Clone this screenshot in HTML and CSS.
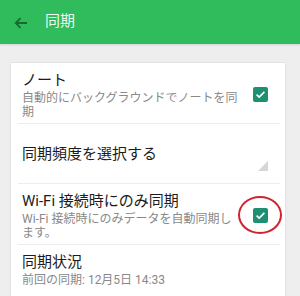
FILE: index.html
```html
<!DOCTYPE html>
<html lang="ja">
<head>
<meta charset="utf-8">
<link rel="stylesheet" href="styles.css">
</head>
<body>
<header class="appbar">
  <svg class="back" width="14" height="12" viewBox="0 0 14 12"><path d="M13 6H2M6.5 1.2L1.7 6l4.8 4.8" fill="none" stroke="#17692f" stroke-width="1.8"/></svg>
  <span class="appbar-title">同期</span>
</header>
<main class="page">
  <section class="card">
    <div class="row">
      <div class="text">
        <div class="title">ノート</div>
        <div class="sub">自動的にバックグラウンドでノートを同期</div>
      </div>
      <span class="check"><svg width="15" height="15" viewBox="0 0 15 15"><path d="M3.6 7.6l2.6 2.5 5.2-5.2" fill="none" stroke="#fff" stroke-width="1.7"/></svg></span>
    </div>
    <div class="row row-single">
      <div class="text">
        <div class="title">同期頻度を選択する</div>
      </div>
      <span class="spinner"></span>
    </div>
    <div class="row">
      <div class="text">
        <div class="title">Wi-Fi 接続時にのみ同期</div>
        <div class="sub">Wi-Fi 接続時にのみデータを自動同期します。</div>
      </div>
      <span class="check marked"><svg width="15" height="15" viewBox="0 0 15 15"><path d="M3.6 7.6l2.6 2.5 5.2-5.2" fill="none" stroke="#fff" stroke-width="1.7"/></svg></span>
    </div>
    <div class="row row-last">
      <div class="text">
        <div class="title">同期状況</div>
        <div class="sub">前回の同期: 12月5日 14:33</div>
      </div>
    </div>
  </section>
</main>
</body>
</html>
```
FILE: styles.css
```css
*, *::before, *::after { box-sizing: border-box; }
html, body { margin: 0; padding: 0; }
body {
  width: 300px;
  height: 296px;
  overflow: hidden;
  background: #eeeeee;
  font-family: Roboto, "Noto Sans CJK JP", sans-serif;
}
.appbar {
  height: 44px;
  background: #30bb5c;
  display: flex;
  align-items: center;
  padding-left: 14px;
  box-shadow: 0 1px 2px rgba(0,0,0,0.12);
}
.back { display: block; margin-top: 1px; }
.appbar-title {
  margin-left: 17px;
  color: #eef9f1;
  font-size: 15px;
  line-height: 20px;
  margin-top: -2px;
}
.page { padding: 19px 15px 0 11px; }
.card {
  background: #ffffff;
  padding: 0 5px 9px 7px;
  box-shadow: 0 0 2px rgba(0,0,0,0.14);
}
.row {
  display: flex;
  align-items: center;
  min-height: 60px;
  padding: 7px 12px 4px 4px;
  border-bottom: 1px solid #ececec;
}
.row-single { padding-top: 0; padding-bottom: 0; }
.row-last { border-bottom: none; align-items: flex-start; padding-bottom: 0; min-height: 50px; }
.text { width: 219px; flex: none; align-self: flex-start; }
.row-single .text { align-self: center; }
.title {
  font-size: 15px;
  line-height: 20px;
  color: #1c1c1c;
}
.sub {
  font-size: 12px;
  line-height: 14px;
  color: #898989;
  margin-top: 1px;
}
.check {
  margin-left: auto;
  width: 15px;
  height: 15px;
  background: #1d8f72;
  border-radius: 2px;
  position: relative;
  display: block;
}
.check svg { display: block; }
.check.marked::after {
  content: "";
  position: absolute;
  left: -15px;
  top: -12px;
  width: 44px;
  height: 38px;
  border: 2px solid #cf2530;
  border-radius: 50%;
}
.spinner {
  margin-left: auto;
  align-self: flex-end;
  margin-bottom: 12px;
  width: 0;
  height: 0;
  border-left: 10px solid transparent;
  border-bottom: 10px solid #d6d6d6;
}
```
